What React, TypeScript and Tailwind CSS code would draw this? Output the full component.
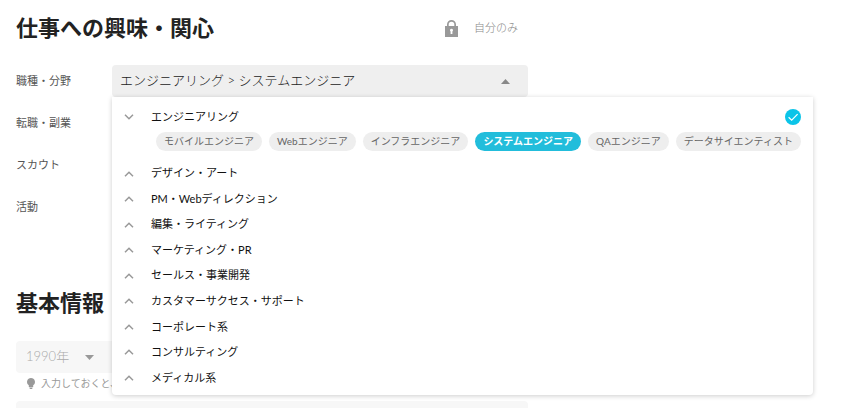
import { useState } from "react";
import clsx from "clsx";

const jobGroups = [
  {
    name: "エンジニアリング",
    jobs: [
      "モバイルエンジニア",
      "Webエンジニア",
      "インフラエンジニア",
      "システムエンジニア",
      "QAエンジニア",
      "データサイエンティスト",
    ],
  },
  { name: "デザイン・アート", jobs: [] },
  { name: "PM・Webディレクション", jobs: [] },
  { name: "編集・ライティング", jobs: [] },
  { name: "マーケティング・PR", jobs: [] },
  { name: "セールス・事業開発", jobs: [] },
  { name: "カスタマーサクセス・サポート", jobs: [] },
  { name: "コーポレート系", jobs: [] },
  { name: "コンサルティング", jobs: [] },
  { name: "メディカル系", jobs: [] },
];

const labels = ["転職・副業", "スカウト", "活動"];

function Chevron({ open }: { open: boolean }) {
  return (
    <svg
      viewBox="0 0 10 6"
      className="w-[10px] h-[6px] shrink-0"
      fill="none"
      stroke="#999"
      strokeWidth="1.5"
    >
      <path d={open ? "M1 0.8 5 4.8 9 0.8" : "M1 5.2 5 1.2 9 5.2"} />
    </svg>
  );
}

function LockIcon() {
  return (
    <svg viewBox="0 0 13 17" className="w-[13px] h-[17px]" fill="#999">
      <path
        fillRule="evenodd"
        d="M0 6h2V4.5a4.5 4.5 0 0 1 9 0V6h2v11H0zM3.7 6h5.6V4.5a2.8 2.8 0 0 0-5.6 0zM6.5 8.8a1.5 1.5 0 0 0-.9 2.7V14h1.8v-2.5a1.5 1.5 0 0 0-.9-2.7z"
      />
    </svg>
  );
}

function BulbIcon() {
  return (
    <svg viewBox="0 0 8 11" className="w-[8px] h-[11px] shrink-0" fill="#999">
      <path d="M4 0a4 4 0 0 0-2.2 7.3V9h4.4V7.3A4 4 0 0 0 4 0zM2.4 9.6h3.2v.6L4.8 11H3.2l-.8-.8z" />
    </svg>
  );
}

function CheckBadge() {
  return (
    <svg viewBox="0 0 16 16" className="ml-auto size-4" fill="none">
      <circle cx="8" cy="8" r="8" fill="#0bc4e8" />
      <path d="M3.6 8.2 6.7 11.2 12.6 5.2" stroke="#fff" strokeWidth="1.2" />
    </svg>
  );
}

export default function App() {
  const [openGroup, setOpenGroup] = useState("エンジニアリング");
  const [selected, setSelected] = useState("システムエンジニア");
  const [menuOpen, setMenuOpen] = useState(true);

  return (
    <main className="h-screen overflow-hidden bg-white px-4 font-['Lato','Noto_Sans_CJK_JP',sans-serif] text-[11px] text-[#222]">
      <div className="max-w-[512px]">
        {/* 仕事への興味・関心 */}
        <section>
          <div className="flex items-center justify-between pt-3 pr-[10px]">
            <h2 className="text-[22px] leading-8 font-bold">仕事への興味・関心</h2>
            <p className="flex items-center gap-4 font-light text-[#888]">
              <LockIcon />
              自分のみ
            </p>
          </div>

          <div className="mt-[21px] flex items-center">
            <span id="job-label" className="w-24 shrink-0 text-[#555]">
              職種・分野
            </span>
            <div className="relative grow">
              <button
                type="button"
                aria-labelledby="job-label job-value"
                aria-expanded={menuOpen}
                onClick={() => setMenuOpen(!menuOpen)}
                className="flex h-8 w-full items-center justify-between rounded-sm bg-[#efefef] pr-[18px] pl-2 text-[13px] font-light"
              >
                <span id="job-value">エンジニアリング &gt; {selected}</span>
                <svg viewBox="0 0 9 5" className="w-[9px] h-[5px]" fill="#888">
                  <path d="M0 5 4.5 0 9 5z" />
                </svg>
              </button>

              {menuOpen && (
                <ul className="absolute top-full left-0 z-10 flex h-[298px] w-[701px] flex-col justify-between rounded-b-sm bg-white pt-[11px] pr-3 pb-2 pl-3 shadow-[0_1px_5px_rgba(0,0,0,0.2)]">
                  {jobGroups.map((group) => (
                    <li key={group.name}>
                      <button
                        type="button"
                        onClick={() => setOpenGroup(group.name)}
                        className="flex h-[18px] w-full items-center text-left text-[#111]"
                      >
                        <Chevron open={group.name === openGroup} />
                        <span className="ml-[17px]">{group.name}</span>
                        {group.jobs.includes(selected) && <CheckBadge />}
                      </button>
                      {group.name === openGroup && group.jobs.length > 0 && (
                        <div className="my-[6px] ml-8 flex gap-[7px]">
                          {group.jobs.map((job) => (
                            <button
                              key={job}
                              type="button"
                              onClick={() => setSelected(job)}
                              className={clsx(
                                "h-[19px] rounded-full px-2 pb-[2px] text-[10px] leading-4 whitespace-nowrap",
                                job === selected
                                  ? "bg-[#22bddb] font-bold text-white"
                                  : "bg-[#eee] text-[#666]"
                              )}
                            >
                              {job}
                            </button>
                          ))}
                        </div>
                      )}
                    </li>
                  ))}
                </ul>
              )}
            </div>
          </div>

          {labels.map((label) => (
            <p key={label} className="mt-[10px] flex h-8 items-center text-[#555]">
              {label}
            </p>
          ))}
        </section>

        {/* 基本情報 */}
        <section className="pt-[64px]">
          <h2 className="text-[22px] leading-8 font-bold">基本情報</h2>
          <div className="mt-[22px] rounded-sm bg-[#f7f7f7]">
            <div className="relative w-24">
              <select
                aria-label="年"
                disabled
                className="h-8 w-full appearance-none pl-[10px] text-[13px] font-light text-[#aaa]"
              >
                <option>1990年</option>
              </select>
              <svg
                viewBox="0 0 9 5"
                className="pointer-events-none absolute top-[14px] right-[18px] w-[9px] h-[5px]"
                fill="#999"
              >
                <path d="M0 0h9L4.5 5z" />
              </svg>
            </div>
          </div>
          <p className="flex h-5 items-center gap-[6px] pl-[11px] text-[10px] text-[#999]">
            <BulbIcon />
            入力しておくと、
          </p>
          <div className="mt-2 h-8 rounded-sm bg-[#f7f7f7]" />
        </section>
      </div>
    </main>
  );
}
